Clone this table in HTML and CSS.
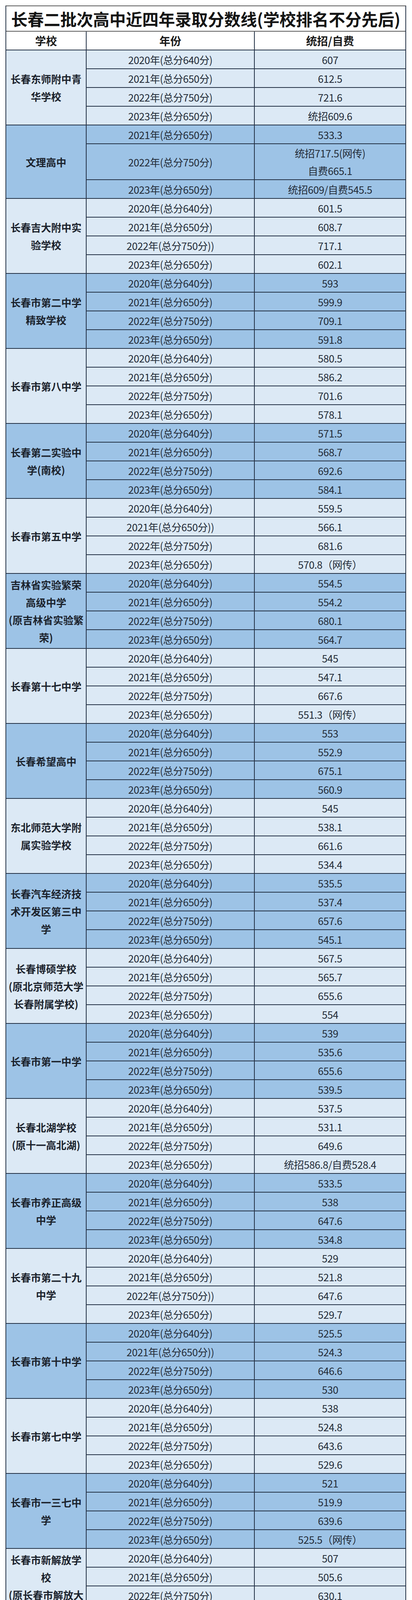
FILE: index.html
```html
<!DOCTYPE html>
<html lang="zh-CN">
<head>
<meta charset="utf-8">
<title>长春二批次高中近四年录取分数线</title>
<link rel="stylesheet" href="styles.css">
</head>
<body>
<div class="wrap">
<div class="sheet">
<div class="title">长春二批次高中近四年录取分数线(学校排名不分先后)</div>
<div class="head">学校</div><div class="head">年份</div><div class="head">统招/自费</div>

<div class="grp g-light">
<div class="school s4">长春东师附中青<br>华学校</div>
<div class="yr">2020年(总分640分)</div><div class="sc">607</div>
<div class="yr">2021年(总分650分)</div><div class="sc">612.5</div>
<div class="yr">2022年(总分750分)</div><div class="sc">721.6</div>
<div class="yr">2023年(总分650分)</div><div class="sc">统招609.6</div>
</div>

<div class="grp g-mid">
<div class="school s3">文理高中</div>
<div class="yr">2021年(总分650分)</div><div class="sc">533.3</div>
<div class="yr">2022年(总分750分)</div><div class="sc">统招717.5(网传)<br>自费665.1</div>
<div class="yr">2023年(总分650分)</div><div class="sc">统招609/自费545.5</div>
</div>

<div class="grp g-light">
<div class="school s4">长春吉大附中实<br>验学校</div>
<div class="yr">2020年(总分640分)</div><div class="sc">601.5</div>
<div class="yr">2021年(总分650分)</div><div class="sc">608.7</div>
<div class="yr">2022年(总分750分))</div><div class="sc">717.1</div>
<div class="yr">2023年(总分650分)</div><div class="sc">602.1</div>
</div>

<div class="grp g-mid">
<div class="school s4">长春市第二中学<br>精致学校</div>
<div class="yr">2020年(总分640分)</div><div class="sc">593</div>
<div class="yr">2021年(总分650分)</div><div class="sc">599.9</div>
<div class="yr">2022年(总分750分)</div><div class="sc">709.1</div>
<div class="yr">2023年(总分650分)</div><div class="sc">591.8</div>
</div>

<div class="grp g-light">
<div class="school s4">长春市第八中学</div>
<div class="yr">2020年(总分640分)</div><div class="sc">580.5</div>
<div class="yr">2021年(总分650分)</div><div class="sc">586.2</div>
<div class="yr">2022年(总分750分)</div><div class="sc">701.6</div>
<div class="yr">2023年(总分650分)</div><div class="sc">578.1</div>
</div>

<div class="grp g-mid">
<div class="school s4">长春第二实验中<br>学(南校)</div>
<div class="yr">2020年(总分640分)</div><div class="sc">571.5</div>
<div class="yr">2021年(总分650分)</div><div class="sc">568.7</div>
<div class="yr">2022年(总分750分)</div><div class="sc">692.6</div>
<div class="yr">2023年(总分650分)</div><div class="sc">584.1</div>
</div>

<div class="grp g-light">
<div class="school s4">长春市第五中学</div>
<div class="yr">2020年(总分640分)</div><div class="sc">559.5</div>
<div class="yr">2021年(总分650分))</div><div class="sc">566.1</div>
<div class="yr">2022年(总分750分)</div><div class="sc">681.6</div>
<div class="yr">2023年(总分650分)</div><div class="sc">570.8（网传）</div>
</div>

<div class="grp g-mid">
<div class="school s4">吉林省实验繁荣<br>高级中学<br>(原吉林省实验繁<br>荣)</div>
<div class="yr">2020年(总分640分)</div><div class="sc">554.5</div>
<div class="yr">2021年(总分650分)</div><div class="sc">554.2</div>
<div class="yr">2022年(总分750分)</div><div class="sc">680.1</div>
<div class="yr">2023年(总分650分)</div><div class="sc">564.7</div>
</div>

<div class="grp g-light">
<div class="school s4">长春第十七中学</div>
<div class="yr">2020年(总分640分)</div><div class="sc">545</div>
<div class="yr">2021年(总分650分)</div><div class="sc">547.1</div>
<div class="yr">2022年(总分750分)</div><div class="sc">667.6</div>
<div class="yr">2023年(总分650分)</div><div class="sc">551.3（网传）</div>
</div>

<div class="grp g-mid">
<div class="school s4">长春希望高中</div>
<div class="yr">2020年(总分640分)</div><div class="sc">553</div>
<div class="yr">2021年(总分650分)</div><div class="sc">552.9</div>
<div class="yr">2022年(总分750分)</div><div class="sc">675.1</div>
<div class="yr">2023年(总分650分)</div><div class="sc">560.9</div>
</div>

<div class="grp g-light">
<div class="school s4">东北师范大学附<br>属实验学校</div>
<div class="yr">2020年(总分640分)</div><div class="sc">545</div>
<div class="yr">2021年(总分650分)</div><div class="sc">538.1</div>
<div class="yr">2022年(总分750分)</div><div class="sc">661.6</div>
<div class="yr">2023年(总分650分)</div><div class="sc">534.4</div>
</div>

<div class="grp g-mid">
<div class="school s4">长春汽车经济技<br>术开发区第三中<br>学</div>
<div class="yr">2020年(总分640分)</div><div class="sc">535.5</div>
<div class="yr">2021年(总分650分)</div><div class="sc">537.4</div>
<div class="yr">2022年(总分750分)</div><div class="sc">657.6</div>
<div class="yr">2023年(总分650分)</div><div class="sc">545.1</div>
</div>

<div class="grp g-light">
<div class="school s4">长春博硕学校<br>(原北京师范大学<br>长春附属学校)</div>
<div class="yr">2020年(总分640分)</div><div class="sc">567.5</div>
<div class="yr">2021年(总分650分)</div><div class="sc">565.7</div>
<div class="yr">2022年(总分750分)</div><div class="sc">655.6</div>
<div class="yr">2023年(总分650分)</div><div class="sc">554</div>
</div>

<div class="grp g-mid">
<div class="school s4">长春市第一中学</div>
<div class="yr">2020年(总分640分)</div><div class="sc">539</div>
<div class="yr">2021年(总分650分)</div><div class="sc">535.6</div>
<div class="yr">2022年(总分750分)</div><div class="sc">655.6</div>
<div class="yr">2023年(总分650分)</div><div class="sc">539.5</div>
</div>

<div class="grp g-light">
<div class="school s4">长春北湖学校<br>(原十一高北湖)</div>
<div class="yr">2020年(总分640分)</div><div class="sc">537.5</div>
<div class="yr">2021年(总分650分)</div><div class="sc">531.1</div>
<div class="yr">2022年(总分750分)</div><div class="sc">649.6</div>
<div class="yr">2023年(总分650分)</div><div class="sc">统招586.8/自费528.4</div>
</div>

<div class="grp g-mid">
<div class="school s4">长春市养正高级<br>中学</div>
<div class="yr">2020年(总分640分)</div><div class="sc">533.5</div>
<div class="yr">2021年(总分650分)</div><div class="sc">538</div>
<div class="yr">2022年(总分750分)</div><div class="sc">647.6</div>
<div class="yr">2023年(总分650分)</div><div class="sc">534.8</div>
</div>

<div class="grp g-light">
<div class="school s4">长春市第二十九<br>中学</div>
<div class="yr">2020年(总分640分)</div><div class="sc">529</div>
<div class="yr">2021年(总分650分)</div><div class="sc">521.8</div>
<div class="yr">2022年(总分750分))</div><div class="sc">647.6</div>
<div class="yr">2023年(总分650分)</div><div class="sc">529.7</div>
</div>

<div class="grp g-mid">
<div class="school s4">长春市第十中学</div>
<div class="yr">2020年(总分640分)</div><div class="sc">525.5</div>
<div class="yr">2021年(总分650分))</div><div class="sc">524.3</div>
<div class="yr">2022年(总分750分)</div><div class="sc">646.6</div>
<div class="yr">2023年(总分650分)</div><div class="sc">530</div>
</div>

<div class="grp g-light">
<div class="school s4">长春市第七中学</div>
<div class="yr">2020年(总分640分)</div><div class="sc">538</div>
<div class="yr">2021年(总分650分)</div><div class="sc">524.8</div>
<div class="yr">2022年(总分750分)</div><div class="sc">643.6</div>
<div class="yr">2023年(总分650分)</div><div class="sc">529.6</div>
</div>

<div class="grp g-mid">
<div class="school s4">长春市一三七中<br>学</div>
<div class="yr">2020年(总分640分)</div><div class="sc">521</div>
<div class="yr">2021年(总分650分)</div><div class="sc">519.9</div>
<div class="yr">2022年(总分750分)</div><div class="sc">639.6</div>
<div class="yr">2023年(总分650分)</div><div class="sc">525.5（网传）</div>
</div>

<div class="grp g-light">
<div class="school s4">长春市新解放学<br>校<br>(原长春市解放大<br>路学校)</div>
<div class="yr">2020年(总分640分)</div><div class="sc">507</div>
<div class="yr">2021年(总分650分)</div><div class="sc">505.6</div>
<div class="yr">2022年(总分750分)</div><div class="sc">630.1</div>
<div class="yr">2023年(总分650分)</div><div class="sc">511.2</div>
</div>

<div class="grp g-mid">
<div class="school s4">长春日章学园高<br>中</div>
<div class="yr">2020年(总分640分)</div><div class="sc">555.0/482.0</div>
<div class="yr">2021年(总分650分)</div><div class="sc">统招553<br>自费488.4</div>
<div class="yr">2022年(总分750分))</div><div class="sc">统招660(网传)<br>自费596</div>
<div class="yr">2023年(总分650分)</div><div class="sc">统招555/自费495</div>
</div>

<div class="grp g-light">
<div class="school s4">长春市清蒲中学</div>
<div class="yr">2020年(总分640分)</div><div class="sc">482</div>
<div class="yr">2021年(总分650分)</div><div class="sc">488</div>
<div class="yr">2022年(总分750分)</div><div class="sc">596</div>
<div class="yr">2023年(总分650分)</div><div class="sc">492</div>
</div>

<div class="grp g-mid">
<div class="school s2">长春力旺高中</div>
<div class="yr">2022年(总分750分)</div><div class="sc">596</div>
<div class="yr">2023年(总分650分)</div><div class="sc">统招610.5/自费510.1</div>
</div>
</div>
<div class="watermark">知乎 @博大81234588</div>
</div>
</body>
</html>
```
FILE: styles.css
```css
html, body {
  margin: 0;
  padding: 0;
  background: #ffffff;
}

body {
  font-family: "Noto Sans CJK SC", "Noto Sans", "Liberation Sans", sans-serif;
  color: #232b37;
}

.wrap {
  position: relative;
  width: 1027px;
  margin: 14px 0 0 14px;
}

.sheet {
  display: grid;
  grid-template-columns: 204px 429px 386px;
  grid-auto-rows: minmax(46px, auto);
  gap: 2px;
  border: 2px solid #243246;
  border-top-color: #5a5a5a;
  background: #243246;
}

.grp { display: contents; }

.title,
.head,
.school,
.yr,
.sc {
  display: flex;
  align-items: center;
  justify-content: center;
  text-align: center;
  font-size: 26px;
  line-height: 45px;
  white-space: nowrap;
}

.title {
  grid-column: 1 / -1;
  height: 63px;
  background: #ffffff;
  font-size: 42px;
  line-height: 1;
  font-weight: 700;
  color: #141414;
  box-shadow: 0 2px 0 #5a5a5a;
  position: relative;
}

.head {
  background: #ffffff;
  font-size: 28px;
  font-weight: 700;
  color: #1a1a1a;
}

.school {
  grid-column: 1;
  font-weight: 700;
  color: #1b222c;
}
.s2 { grid-row: span 2; }
.s3 { grid-row: span 3; }
.s4 { grid-row: span 4; }

.yr,
.sc {
  letter-spacing: -0.5px;
  color: #242c38;
}
.yr { grid-column: 2; }
.sc { grid-column: 3; }

.g-light > div { background: #dce9f5; }
.g-mid > div { background: #9dc3e6; }

.watermark {
  position: absolute;
  right: 12px;
  bottom: 20px;
  font-size: 30px;
  line-height: 36px;
  color: #ffffff;
  white-space: nowrap;
  text-shadow: 0 0 2px rgba(40, 50, 60, 0.9), 1px 1px 2px rgba(40, 50, 60, 0.8);
}
```
